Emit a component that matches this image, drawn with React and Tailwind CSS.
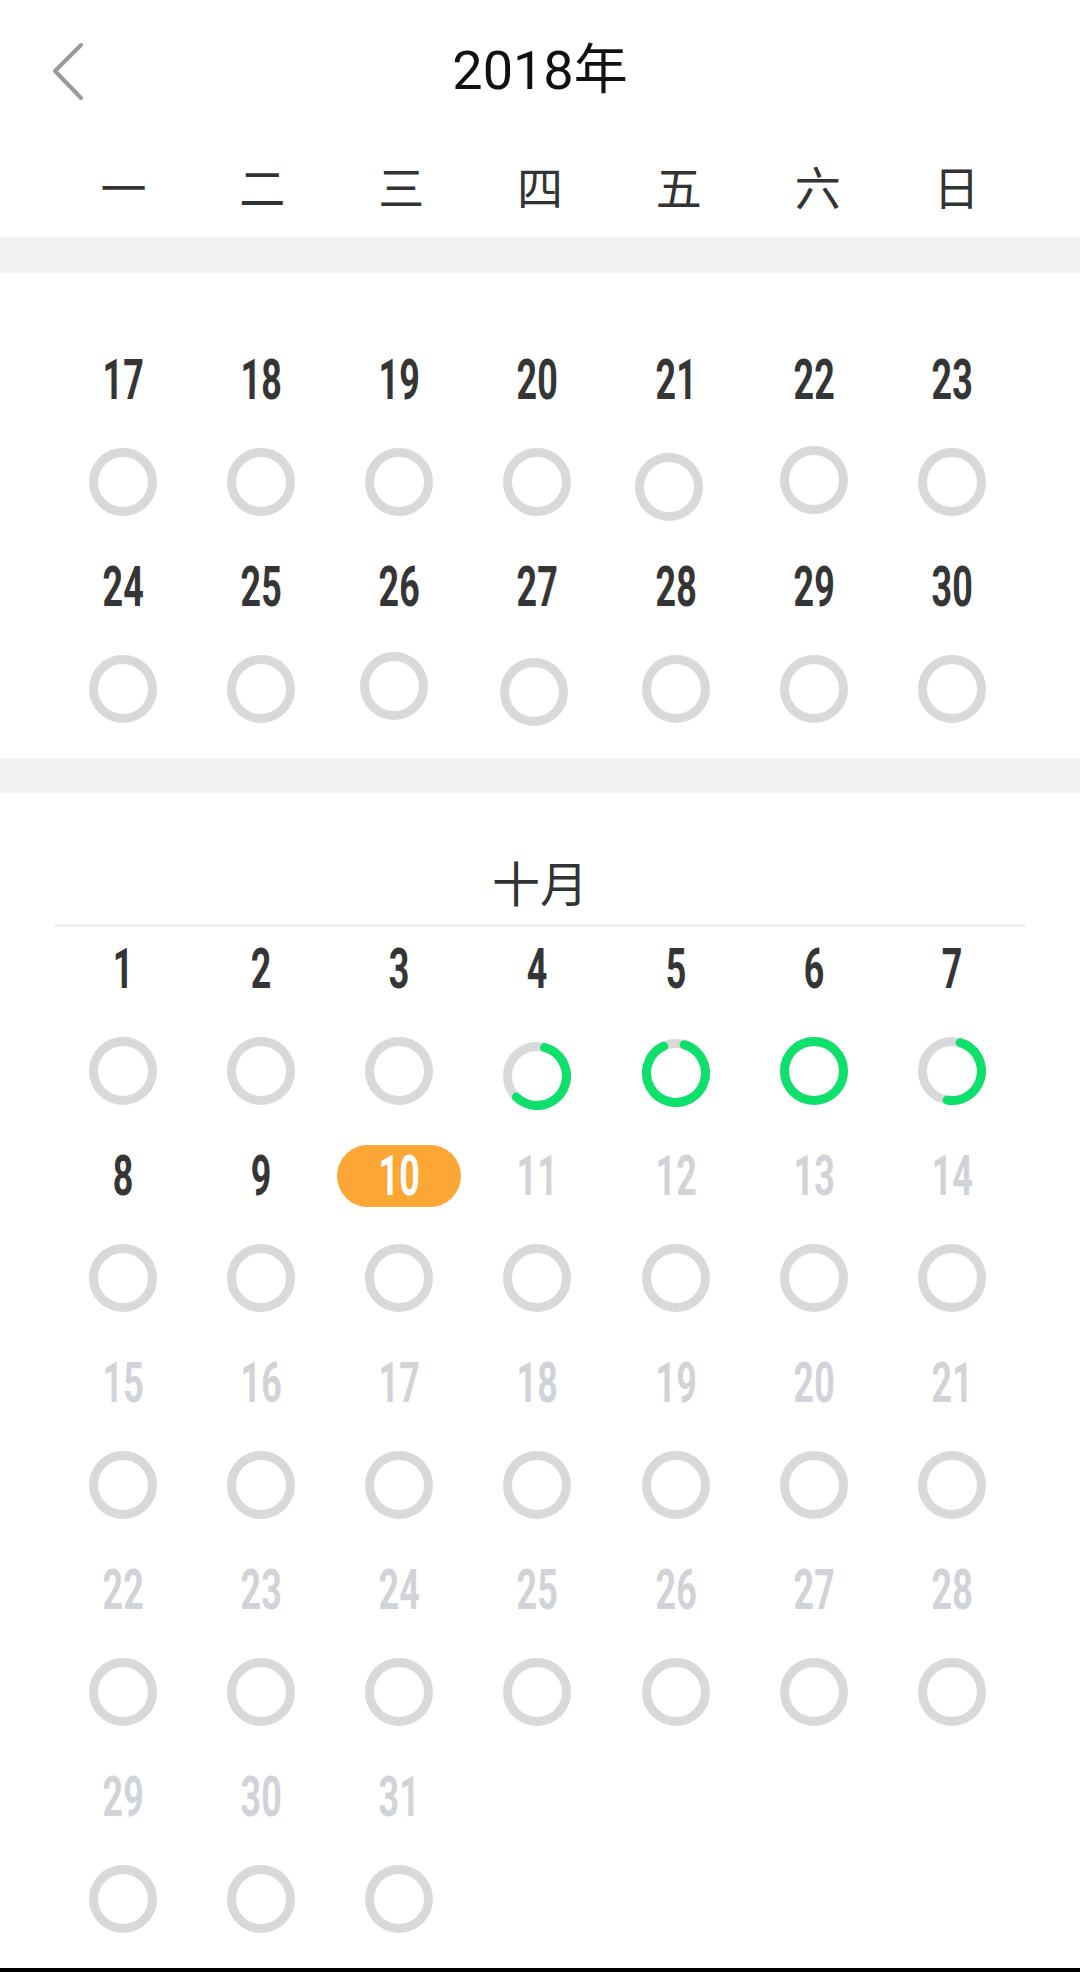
import React from 'react';

const weekdays = ['一', '二', '三', '四', '五', '六', '日'];

const septWeeks = [
  [17, 18, 19, 20, 21, 22, 23],
  [24, 25, 26, 27, 28, 29, 30],
];

const octDays = Array.from({ length: 31 }, (_, i) => i + 1);
const octWeeks = [];
for (let i = 0; i < octDays.length; i += 7) octWeeks.push(octDays.slice(i, i + 7));

// green arcs: start angle from 12 o'clock, length in degrees
const octProgress = {
  4: { start: 15, len: 209 },
  5: { start: 16, len: 319 },
  6: { full: true },
  7: { start: 16, len: 173 },
};

// rings in the screenshot are not perfectly aligned
const septNudge = {
  21: '-translate-x-[7px] translate-y-[5px]',
  22: '-translate-y-[2px]',
  26: '-translate-x-[5px] -translate-y-[3px]',
  27: '-translate-x-[3px] translate-y-[3px]',
};
const octNudge = {
  4: 'translate-y-[5px]',
  5: 'translate-y-[2px]',
};

const TODAY = 10;

const Ring = ({ progress }) => {
  const r = 29.5;
  const c = 2 * Math.PI * r;
  return (
    <svg width="68" height="68" viewBox="0 0 68 68">
      <circle cx="34" cy="34" r={r} fill="none" stroke="#d9d9d9" strokeWidth="9" />
      {progress && progress.full && (
        <circle cx="34" cy="34" r={r} fill="none" stroke="#0ee16b" strokeWidth="9" />
      )}
      {progress && !progress.full && (
        <circle
          cx="34"
          cy="34"
          r={r}
          fill="none"
          stroke="#0ee16b"
          strokeWidth="9"
          strokeLinecap="round"
          strokeDasharray={`${(progress.len / 360) * c} ${c}`}
          transform={`rotate(${progress.start - 90} 34 34)`}
        />
      )}
    </svg>
  );
};

const DayNum = ({ n, tone }) => {
  if (tone === 'today') {
    return (
      <div className="w-[124px] h-[62px] rounded-full bg-[#fba635] flex items-center justify-center">
        <span className="inline-block scale-x-[0.64] font-['Roboto',sans-serif] font-bold text-[56px] leading-[62px] text-white">
          {n}
        </span>
      </div>
    );
  }
  return (
    <span
      className={`inline-block scale-x-[0.64] font-['Roboto',sans-serif] font-bold text-[56px] leading-[84px] ${
        tone === 'future' ? 'text-[#d0d4d9]' : 'text-[#353535]'
      }`}
    >
      {n}
    </span>
  );
};

const Week = ({ days, toneOf, progressOf, nudge }) => (
  <div className="grid grid-cols-7 pl-[54px] pr-[59px]">
    {days.map((d) => (
      <div key={d} className="flex flex-col items-center">
        <div className="h-[84px] flex items-center justify-center">
          <DayNum n={d} tone={toneOf(d)} />
        </div>
        <div className="h-[123px] pt-[26px]">
          <div className={nudge[d] || ''}>
            <Ring progress={progressOf(d)} />
          </div>
        </div>
      </div>
    ))}
  </div>
);

const App = () => {
  return (
    <div className="w-[1080px] h-[1972px] bg-white flex flex-col overflow-hidden font-['Roboto','Noto_Sans_CJK_SC',sans-serif]">
      {/* Header */}
      <div className="h-[142px] flex items-center px-[50px]">
        <div className="w-[80px]">
          <svg width="36" height="60" viewBox="0 0 36 60">
            <polyline points="31,4 5,30 31,57" fill="none" stroke="#9a9a9a" strokeWidth="4" strokeLinecap="round" strokeLinejoin="round" />
          </svg>
        </div>
        <h1 className="flex-1 text-center text-[54px] leading-[60px] text-[#111] font-normal">2018年</h1>
        <div className="w-[80px]" />
      </div>

      {/* Weekdays */}
      <div className="h-[95px] pb-[10px] grid grid-cols-7 px-[54px] items-center">
        {weekdays.map((w) => (
          <div key={w} className="text-center text-[46px] leading-[60px] text-[#333] font-['Noto_Sans_CJK_SC',sans-serif]">
            {w}
          </div>
        ))}
      </div>

      <div className="h-[36px] bg-[#f2f2f2]" />

      {/* September (scrolled) */}
      <div className="pt-[65px] h-[485px]">
        {septWeeks.map((w, i) => (
          <Week key={i} days={w} toneOf={() => 'past'} progressOf={() => null} nudge={septNudge} />
        ))}
      </div>

      <div className="h-[35px] bg-[#f2f2f2]" />

      {/* October */}
      <div className="pt-[64px] pb-[19px]">
        <div className="text-center text-[48px] leading-[48px] text-[#333] font-['Noto_Sans_CJK_SC',sans-serif]">十月</div>
      </div>
      <div className="mx-[54px] h-[3px] bg-[#f0f0f0]" />
      <div>
        {octWeeks.map((w, i) => (
          <Week
            key={i}
            days={w}
            toneOf={(d) => (d === TODAY ? 'today' : d < TODAY ? 'past' : 'future')}
            progressOf={(d) => octProgress[d] || null}
            nudge={octNudge}
          />
        ))}
      </div>

      <div className="mt-auto h-[4px] bg-black" />
    </div>
  );
};

export default App;
